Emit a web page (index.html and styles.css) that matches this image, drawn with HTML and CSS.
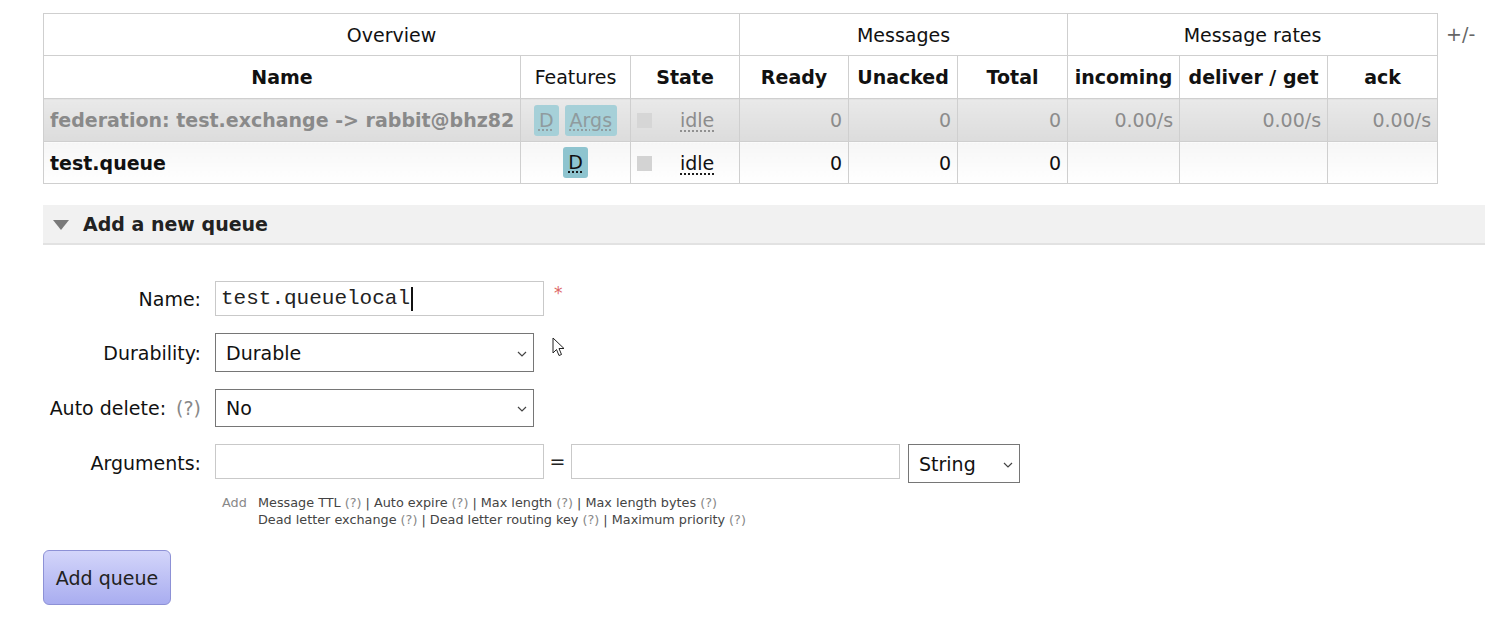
FILE: index.html
```html
<!DOCTYPE html>
<html>
<head>
<meta charset="utf-8">
<link rel="stylesheet" href="styles.css">
</head>
<body>
<div class="page">
  <div class="table-row">
    <table class="queues">
      <colgroup>
        <col class="c-name"><col class="c-feat"><col class="c-state"><col class="c-num"><col class="c-num"><col class="c-total"><col class="c-inc"><col class="c-del"><col class="c-ack">
      </colgroup>
      <thead>
        <tr class="group">
          <th colspan="3">Overview</th>
          <th colspan="3">Messages</th>
          <th colspan="3">Message rates</th>
        </tr>
        <tr class="cols">
          <th class="b">Name</th>
          <th>Features</th>
          <th class="b">State</th>
          <th class="b">Ready</th>
          <th class="b">Unacked</th>
          <th class="b">Total</th>
          <th class="b">incoming</th>
          <th class="b">deliver / get</th>
          <th class="b">ack</th>
        </tr>
      </thead>
      <tbody>
        <tr class="row-fed">
          <td class="name">federation: test.exchange -&gt; rabbit@bhz82</td>
          <td class="feat"><span class="badge">D</span><span class="badge">Args</span></td>
          <td class="state"><span class="sq"></span><span class="idle">idle</span></td>
          <td class="num">0</td>
          <td class="num">0</td>
          <td class="num">0</td>
          <td class="num">0.00/s</td>
          <td class="num">0.00/s</td>
          <td class="num">0.00/s</td>
        </tr>
        <tr class="row-q">
          <td class="name">test.queue</td>
          <td class="feat"><span class="badge">D</span></td>
          <td class="state"><span class="sq"></span><span class="idle">idle</span></td>
          <td class="num">0</td>
          <td class="num">0</td>
          <td class="num">0</td>
          <td class="num"></td>
          <td class="num"></td>
          <td class="num"></td>
        </tr>
      </tbody>
    </table>
    <div class="plusminus">+/-</div>
  </div>

  <div class="section-head">
    <svg class="tri" width="16" height="10" viewBox="0 0 16 10"><polygon points="0,0 16,0 8,10" fill="#7a7a7a"/></svg>
    <span>Add a new queue</span>
  </div>

  <div class="form">
    <div class="frow r-name">
      <div class="label">Name:</div>
      <div class="field mono">test.queuelocal<span class="caret"></span></div>
      <span class="req">*</span>
    </div>
    <div class="frow r-dur">
      <div class="label">Durability:</div>
      <div class="select wide"><span>Durable</span><svg width="10" height="6" viewBox="0 0 10 6"><polyline points="1,1 5,5 9,1" fill="none" stroke="#444" stroke-width="1.2"/></svg></div>
    </div>
    <div class="frow r-auto">
      <div class="label">Auto delete: <span class="help">(?)</span></div>
      <div class="select wide"><span>No</span><svg width="10" height="6" viewBox="0 0 10 6"><polyline points="1,1 5,5 9,1" fill="none" stroke="#444" stroke-width="1.2"/></svg></div>
    </div>
    <div class="frow r-args">
      <div class="label">Arguments:</div>
      <div class="field"></div>
      <span class="eq">=</span>
      <div class="field"></div>
      <div class="select type"><span>String</span><svg width="10" height="6" viewBox="0 0 10 6"><polyline points="1,1 5,5 9,1" fill="none" stroke="#444" stroke-width="1.2"/></svg></div>
    </div>
    <div class="hints">
      <span class="add">Add</span>
      <div class="links">
        <div>Message TTL <span class="help">(?)</span> | Auto expire <span class="help">(?)</span> | Max length <span class="help">(?)</span> | Max length bytes <span class="help">(?)</span></div>
        <div>Dead letter exchange <span class="help">(?)</span> | Dead letter routing key <span class="help">(?)</span> | Maximum priority <span class="help">(?)</span></div>
      </div>
    </div>
  </div>

  <button class="btn">Add queue</button>

  <svg class="cursor" width="14" height="21" viewBox="0 0 14 21"><path d="M1 1 L1 16 L4.5 12.5 L7 18.5 L9.5 17.5 L7 11.5 L12 11.5 Z" fill="#fff" stroke="#222" stroke-width="1"/></svg>
</div>
</body>
</html>
```

FILE: styles.css
```css
html, body {
  margin: 0;
  padding: 0;
  background: #fff;
}
body {
  font-family: "DejaVu Sans", Verdana, sans-serif;
  font-size: 19px;
  color: #222;
}
.page {
  position: relative;
  padding: 13px 0 0 43px;
  height: 615px;
}
.table-row {
  display: flex;
  align-items: flex-start;
  gap: 8px;
}
.plusminus {
  color: #666;
  padding-top: 10px;
  font-size: 19px;
}
.queues {
  border-collapse: collapse;
  table-layout: fixed;
  width: 1395px;
}
.c-name { width: 477px; }
.c-feat { width: 110px; }
.c-state { width: 109px; }
.c-num { width: 109px; }
.c-total { width: 110px; }
.c-inc { width: 112px; }
.c-del { width: 148px; }
.c-ack { width: 110px; }
.queues th, .queues td {
  border: 1px solid #cfcfcf;
  padding: 0 6px;
  white-space: nowrap;
  overflow: hidden;
}
.queues th {
  font-weight: normal;
  color: #111;
  background: #fff;
}
.queues th.b { font-weight: bold; }
.group th { height: 41px; }
.cols th { height: 42px; }
.row-fed td { height: 42px; }
.row-q td { height: 41px; }
.row-fed td {
  background: linear-gradient(#e9e9e9, #dcdcdc);
  color: #8c8c8c;
}
.row-fed td.name { font-weight: bold; color: #8a8a8a; }
.row-q td {
  background: linear-gradient(#f6f6f6, #ffffff);
  color: #111;
}
.row-q td.name { font-weight: bold; }
td.num { text-align: right; }
td.feat { text-align: center; padding: 0 2px; }
.badge {
  display: inline-block;
  background: #8ec4cf;
  border-radius: 3px;
  padding: 4px 5px;
  line-height: 23px;
  text-decoration: underline dotted;
  text-underline-offset: 3px;
  color: #111;
  margin: 0 3px;
  vertical-align: middle;
}
.row-fed .badge {
  background: #a6d0d8;
  color: #8f9b9e;
}
td.state { padding: 0 6px; }
.sq {
  display: inline-block;
  width: 15px;
  height: 15px;
  background: #d3d3d3;
  vertical-align: -1px;
  margin-right: 28px;
}
.row-fed .sq { background: #d6d6d6; }
.idle {
  text-decoration: underline dotted;
  text-underline-offset: 4px;
}
.section-head {
  margin-top: 21px;
  height: 38px;
  background: #f1f1f1;
  border-bottom: 2px solid #e2e2e2;
  display: flex;
  align-items: center;
  gap: 14px;
  padding-left: 10px;
  font-weight: bold;
  color: #222;
}
.section-head .tri { margin-top: 1px; }
.form {
  margin-top: 36px;
}
.frow {
  display: flex;
  align-items: center;
}
.label {
  width: 158px;
  text-align: right;
  margin-right: 14px;
  color: #111;
  white-space: nowrap;
}
.label .help { margin-left: 4px; }
.help { color: #888; }
.field {
  box-sizing: border-box;
  width: 329px;
  height: 35px;
  border: 1px solid #c9c9c9;
  background: #fff;
  display: flex;
  align-items: center;
  padding-left: 5px;
}
.mono {
  font-family: "Liberation Mono", "Courier New", monospace;
  font-size: 21px;
  color: #222;
}
.caret {
  display: inline-block;
  width: 2px;
  height: 24px;
  background: #111;
  margin-left: 1px;
}
.req {
  color: #d66;
  margin-left: 10px;
  align-self: flex-start;
  font-size: 17px;
  margin-top: 2px;
}
.r-dur { margin-top: 17px; }
.r-auto { margin-top: 17px; }
.r-args { margin-top: 17px; }
.select {
  box-sizing: border-box;
  height: 39px;
  border: 1px solid #767676;
  background: #fff;
  display: flex;
  align-items: center;
  justify-content: space-between;
  padding: 0 6px 0 10px;
  color: #111;
}
.select svg { margin-top: 2px; }
.select.wide { width: 319px; }
.r-auto .select { height: 38px; }
.select.type {
  width: 112px;
  margin-left: 8px;
  align-self: flex-start;
  margin-top: 0;
}
.r-args { align-items: flex-start; }
.r-args .label { margin-top: 8px; }
.eq {
  width: 27px;
  text-align: center;
  margin-top: 6px;
}
.hints {
  display: flex;
  margin-left: 179px;
  margin-top: 11px;
  font-size: 12.8px;
  line-height: 17px;
  color: #444;
}
.hints .add {
  color: #888;
  width: 36px;
}
.btn {
  display: block;
  margin-top: 22px;
  width: 128px;
  height: 55px;
  border: 1px solid #8d91d6;
  border-radius: 6px;
  background: linear-gradient(#d3d5fa, #a9adf0);
  font-family: "DejaVu Sans", Verdana, sans-serif;
  font-size: 19px;
  color: #222;
  padding: 0;
}
.cursor {
  position: absolute;
  left: 552px;
  top: 337px;
}
```
